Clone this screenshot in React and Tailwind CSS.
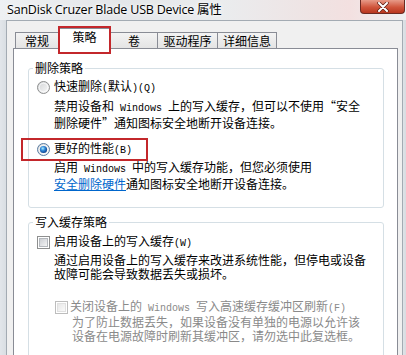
import React from "react";

const M = ({ children }) => (
  <span className="font-['Liberation_Mono',monospace] text-[10px]">{children}</span>
);

const Radio = ({ checked }) => (
  <svg width="13" height="13" viewBox="0 0 13 13" className="shrink-0">
    <defs>
      <linearGradient id={checked ? "rgA" : "rgB"} x1="0" y1="0" x2="1" y2="1">
        <stop offset="0" stopColor="#d0d2d4" />
        <stop offset="1" stopColor="#fbfbfb" />
      </linearGradient>
      <radialGradient id="dot" cx="0.4" cy="0.35" r="0.7">
        <stop offset="0" stopColor="#a8ecff" />
        <stop offset="0.45" stopColor="#2f86d6" />
        <stop offset="1" stopColor="#0c3a85" />
      </radialGradient>
    </defs>
    <circle cx="6.5" cy="6.5" r="6" fill={`url(#${checked ? "rgA" : "rgB"})`} stroke={checked ? "#5b7ea3" : "#8e8f8f"} />
    <circle cx="6.5" cy="6.5" r="4.3" fill="none" stroke="#ffffff" strokeOpacity="0.7" />
    {checked && <circle cx="6.5" cy="6.5" r="3.6" fill="url(#dot)" />}
  </svg>
);

const Check = ({ disabled }) => (
  <svg width="13" height="13" viewBox="0 0 13 13" className="shrink-0">
    <defs>
      <linearGradient id={disabled ? "cgD" : "cgE"} x1="0" y1="0" x2="1" y2="1">
        <stop offset="0" stopColor={disabled ? "#e6e6e6" : "#c9ccd1"} />
        <stop offset="1" stopColor={disabled ? "#fbfbfb" : "#f6f6f6"} />
      </linearGradient>
    </defs>
    <rect x="0.5" y="0.5" width="12" height="12" fill="#ffffff" stroke={disabled ? "#bdbdbd" : "#8e8f8f"} />
    <rect x="2.5" y="2.5" width="8" height="8" fill={`url(#${disabled ? "cgD" : "cgE"})`} stroke={disabled ? "#e0e0e0" : "#b4b8bd"} strokeWidth="1" />
  </svg>
);

const Tab = ({ label, w }) => (
  <div
    className={`${w} h-[16px] border-t border-r border-[#898c95] bg-[linear-gradient(#f3f3f3,#e4e4e4)] flex items-center justify-center text-[12px] leading-[14px]`}
  >
    {label}
  </div>
);

export default function App() {
  return (
    <div className="w-[406px] h-[355px] overflow-hidden flex flex-col bg-[#e9ecef] font-['Noto_Sans_CJK_SC',sans-serif] text-black">
      {/* Title bar */}
      <div className="h-[22px] flex items-start bg-[linear-gradient(90deg,#eef0f3_0%,#e4e6e9_30%,#eaecee_55%,#efe3e3_78%,#f3e0e0_86%,#eef0f2_100%)]">
        <div className="pl-[7px] h-[20px] flex items-center text-[12.5px] font-['Open_Sans','Noto_Sans_CJK_SC',sans-serif] tracking-[-0.2px] [text-shadow:0_0_6px_#ffffff,0_0_3px_#ffffff]">
          SanDisk Cruzer Blade USB Device 属性
        </div>
        <div className="ml-auto mr-[1px] w-[45px] h-[14px] rounded-b-[4px] border border-t-0 border-[#6b2a22] bg-[linear-gradient(#e79a88,#d0553c_55%,#b8361f)] flex items-center justify-center">
          <svg width="12" height="10" viewBox="0 0 12 10">
            <path d="M2 1 L10 9 M10 1 L2 9" stroke="#5a1d14" strokeWidth="3.4" strokeLinecap="round" />
            <path d="M2 1 L10 9 M10 1 L2 9" stroke="#ffffff" strokeWidth="2" strokeLinecap="round" />
          </svg>
        </div>
      </div>

      {/* Window body */}
      <div className="flex-1 flex">
        <div className="w-[6px] bg-[linear-gradient(90deg,#e2e6ea,#d9dee3)]" />
        <div className="flex-1 flex flex-col bg-[#f0f0f0] border-l border-t border-r border-[#a3abb3] pl-[6px] pr-[4px] pt-[7px]">
          {/* Tabs */}
          <div className="flex items-end pl-[2px]">
            <div className="w-[44px] h-[16px] border-l border-t border-r border-[#898c95] bg-[linear-gradient(#f3f3f3,#e4e4e4)] flex items-center justify-center text-[12px] leading-[14px]">
              常规
            </div>
            <div className="relative z-10 w-[52px] h-[21px] -mb-[1px] border-t border-r border-[#898c95] bg-white flex items-start justify-center pt-[1px] text-[12px] leading-[14px]">
              策略
              <div className="absolute left-[-1px] top-[-3px] w-[53px] h-[28px] border-2 border-[#c3272b]" />
            </div>
            <Tab label="卷" w="w-[47px]" />
            <Tab label="驱动程序" w="w-[60px]" />
            <Tab label="详细信息" w="w-[59px]" />
          </div>

          {/* Panel */}
          <div className="flex-1 bg-white border border-[#898c95] pl-[14px] pr-[13px] pt-[11px] text-[12px]">
            {/* Group 1 */}
            <fieldset className="border border-[#d5dfe5] rounded-[3px] px-0 pb-[16px]">
              <legend className="ml-[4px] px-[2px] leading-[16px]">删除策略</legend>
              <div className="pl-[8px]">
                <div className="mt-[4px] h-[14px] flex items-center gap-[4px] leading-[14px]">
                  <Radio />
                  <span>
                    快速删除<M>(</M>默认<M>)(Q)</M>
                  </span>
                </div>
                <div className="ml-[17px] mt-[5px] leading-[13.5px] whitespace-nowrap">
                  <div>
                    禁用设备和<M> Windows </M>上的写入缓存，但可以不使用“安全
                  </div>
                  <div>删除硬件”通知图标安全地断开设备连接。</div>
                </div>
                <div className="mt-[9px] -ml-[16px] w-[127px] h-[23px] border-2 border-[#c3272b] pl-[14px] flex items-center gap-[4px] leading-[14px]">
                  <Radio checked />
                  <span>
                    更好的性能<M>(B)</M>
                  </span>
                </div>
                <div className="ml-[17px] -mt-[1px] leading-[14px] whitespace-nowrap">
                  <div>
                    启用<M> Windows </M>中的写入缓存功能，但您必须使用
                  </div>
                  <div>
                    <span className="text-[#0066cc] underline decoration-[#0066cc]">安全删除硬件</span>
                    通知图标安全地断开设备连接。
                  </div>
                </div>
              </div>
            </fieldset>

            {/* Group 2 */}
            <fieldset className="mt-[6px] border border-[#d5dfe5] rounded-[3px] px-0 pb-[20px]">
              <legend className="ml-[4px] px-[2px] leading-[16px]">写入缓存策略</legend>
              <div className="pl-[8px]">
                <div className="mt-[5px] h-[14px] flex items-center gap-[4px] leading-[14px]">
                  <Check />
                  <span>
                    启用设备上的写入缓存<M>(W)</M>
                  </span>
                </div>
                <div className="ml-[17px] mt-[4px] leading-[14px] whitespace-nowrap">
                  <div>通过启用设备上的写入缓存来改进系统性能，但停电或设备</div>
                  <div>故障可能会导致数据丢失或损坏。</div>
                </div>
                <div className="ml-[18px] mt-[19px] h-[14px] flex items-center gap-[2px] leading-[14px] text-[#8a8a8a]">
                  <Check disabled />
                  <span className="whitespace-nowrap">
                    关闭设备上的<M> Windows </M>写入高速缓存缓冲区刷新<M>(F)</M>
                  </span>
                </div>
                <div className="ml-[35px] mt-[1px] leading-[13.5px] whitespace-nowrap text-[#8a8a8a]">
                  <div>为了防止数据丢失，如果设备没有单独的电源以允许该</div>
                  <div>设备在电源故障时刷新其缓冲区，请勿选中此复选框。</div>
                </div>
              </div>
            </fieldset>
          </div>
        </div>
        <div className="w-[3px] bg-[linear-gradient(90deg,#dfe3e7,#d7dce1)]" />
      </div>
    </div>
  );
}
